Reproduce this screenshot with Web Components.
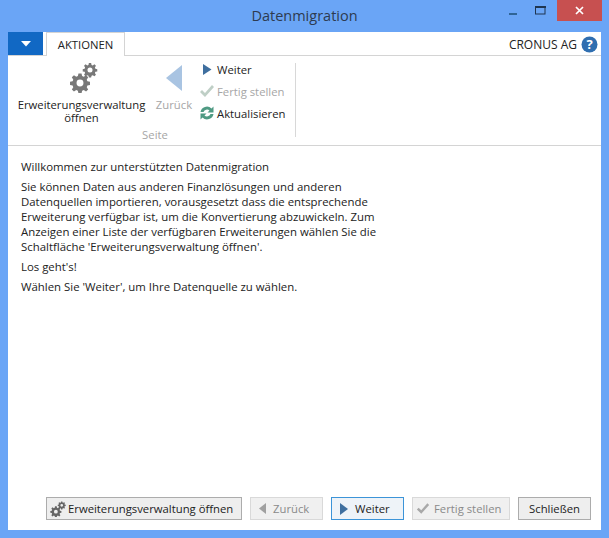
<!DOCTYPE html>
<html lang="de">
<head>
<meta charset="utf-8">
<title>Datenmigration</title>
<style>
  html, body { margin: 0; padding: 0; }
  body { width: 609px; height: 538px; overflow: hidden; font-family: "Open Sans", "Noto Sans", sans-serif; }
</style>
</head>
<body>
<nav-window>
  <ribbon-bar></ribbon-bar>
  <intro-text></intro-text>
  <footer-bar></footer-bar>
</nav-window>

<script>
// <use> can't reach across shadow roots, so the gear path gets inlined
const GEAR = 'M-1.6-10h3.2l.6 2.7 1.7.7 2.4-1.500 2.200 2.200-1.500 2.400.7 1.700 2.700.6v3.200l-2.700.6-.7 1.700 1.500 2.400-2.200 2.200-2.400-1.500-1.700.7-.6 2.700h-3.200l-.6-2.700-1.700-.7-2.400 1.500-2.200-2.200 1.500-2.400-.7-1.700-2.700-.6v-3.200l2.700-.6.7-1.700-1.500-2.400 2.200-2.200 2.400 1.500 1.700-.7zM0-3.600a3.600 3.600 0 1 0 0 7.200 3.600 3.600 0 0 0 0-7.200z';

const gears = (size) => `
  <svg width="${size}" height="${size}" viewBox="0 0 30 30" fill="#787878">
    <path fill-rule="evenodd" d="${GEAR}" transform="translate(12 20) scale(.96)"/>
    <path fill-rule="evenodd" d="${GEAR}" transform="translate(22 7) scale(.7)"/>
  </svg>`;

class NavWindow extends HTMLElement {
  constructor() {
    super();
    this.attachShadow({ mode: 'open' });
    this.shadowRoot.innerHTML = `
      <style>
        :host {
          display: flex;
          flex-direction: column;
          width: 609px;
          height: 538px;
          box-sizing: border-box;
          background: #6aa5f6;
          padding: 0 8px 8px;
          color: #222;
        }
        .titlebar {
          height: 32px;
          flex: none;
          display: flex;
          justify-content: center;
          align-items: center;
          position: relative;
        }
        .title {
          font-size: 14.5px;
          color: #2d3b50;
          margin-bottom: 1px;
        }
        .controls {
          position: absolute;
          top: 0;
          right: -1px;
          display: flex;
          align-items: flex-start;
        }
        .ctl {
          width: 30px;
          height: 21px;
          display: flex;
          align-items: center;
          justify-content: center;
        }
        .close {
          width: 45px;
          height: 21px;
          background: #c75050;
        }
        .client {
          flex: 1;
          min-height: 0;
          background: #fff;
          display: flex;
          flex-direction: column;
        }
      </style>
      <div class="titlebar">
        <span class="title">Datenmigration</span>
        <div class="controls">
          <div class="ctl">
            <svg width="10" height="10" viewBox="0 0 10 10"><rect x="1" y="7" width="8" height="2" fill="#2f6496"/></svg>
          </div>
          <div class="ctl" style="width:16px;margin:0 9px 0 4px">
            <svg width="11" height="9" viewBox="0 0 11 9"><rect x=".5" y=".5" width="9.500" height="7.500" fill="none" stroke="#1f3550"/><rect x="0" y="0" width="11" height="2" fill="#1f3550"/></svg>
          </div>
          <div class="ctl close">
            <svg width="9" height="9" viewBox="0 0 9 9"><path d="M1 1l7 7M8 1L1 8" stroke="#fff" stroke-width="1.700"/></svg>
          </div>
        </div>
      </div>
      <div class="client"><slot></slot></div>
    `;
  }
}

class RibbonBar extends HTMLElement {
  constructor() {
    super();
    this.attachShadow({ mode: 'open' });
    this.shadowRoot.innerHTML = `
      <style>
        :host { display: block; flex: none; font-size: 11.3px; }
        .tabs {
          height: 23px;
          display: flex;
          align-items: stretch;
          border-bottom: 1px solid #d4d4d4;
        }
        .menu {
          width: 35px;
          height: 23px;
          background: #1168c4;
          display: flex;
          align-items: center;
          justify-content: center;
        }
        .tab {
          margin-left: 3px;
          width: 79px;
          height: 24px;
          box-sizing: border-box;
          border: 1px solid #d4d4d4;
          border-bottom: 0;
          background: #fff;
          text-align: center;
          line-height: 24px;
          color: #222;
          position: relative;
          z-index: 1;
          margin-bottom: -1px;
        }
        .company {
          margin-left: auto;
          display: flex;
          align-items: center;
          gap: 4px;
          padding-right: 3px;
          padding-top: 1px;
          color: #222;
          font-size: 12px;
        }
        .body {
          height: 89px;
          border-bottom: 1px solid #d4d4d4;
          display: flex;
          align-items: flex-start;
        }
        .group {
          display: grid;
          grid-template-columns: 127px 54px auto;
          grid-template-rows: 66px 1fr;
          box-sizing: border-box;
          width: 288px;
          height: 74px;
          padding-left: 10px;
          margin-top: 7px;
          border-right: 1px solid #d8d8d8;
        }
        .big {
          display: flex;
          flex-direction: column;
          align-items: center;
          line-height: 13px;
          text-align: center;
          white-space: nowrap;
        }
        .big .ic { height: 35px; display: flex; align-items: flex-start; justify-content: center; }
        .gears { margin-left: 3px; }
        .back { padding-left: 4px; color: #a6a6a6; }
        .back svg { margin-top: 2px; }
        .small { display: flex; flex-direction: column; margin-top: -5px; }
        .row { height: 22px; display: flex; align-items: center; gap: 2px; white-space: nowrap; }
        .slot { width: 16px; height: 16px; flex: none; display: flex; align-items: center; justify-content: center; }
        .row.off { color: #a6a6a6; }
        .caption { grid-column: 1 / span 3; text-align: center; color: #a6a6a6; padding-right: 3px; line-height: 12px; }
      </style>
      <div class="tabs">
        <div class="menu"><svg width="10" height="6" viewBox="0 0 10 6"><path d="M0 0h10L5 5.500z" fill="#fff"/></svg></div>
        <div class="tab">AKTIONEN</div>
        <div class="company">CRONUS AG
          <svg width="17" height="17" viewBox="0 0 17 17">
            <circle cx="8.500" cy="8.500" r="8" fill="#2f6eb0"/>
            <text x="8.500" y="13.200" text-anchor="middle" font-size="13" font-weight="700" font-family="Open Sans" fill="#fff">?</text>
          </svg>
        </div>
      </div>
      <div class="body">
        <div class="group">
          <div class="big">
            <div class="ic gears">${gears(30)}</div>
            <span>Erweiterungsverwaltung<br>öffnen</span>
          </div>
          <div class="big back">
            <div class="ic"><svg width="17" height="26" viewBox="0 0 17 26"><path d="M16 0v26L0 13z" fill="#a9c4e2"/></svg></div>
            <span>Zurück</span>
          </div>
          <div class="small">
            <div class="row"><span class="slot"><svg width="9" height="11" viewBox="0 0 9 11"><path d="M0 0v11l8.500-5.500z" fill="#3f6f9f"/></svg></span>Weiter</div>
            <div class="row off"><span class="slot"><svg width="16" height="14" viewBox="0 0 16 14"><path d="M1 8l2-2 3 3 7-8 2 2-9 10z" fill="#bfcfc6"/></svg></span>Fertig stellen</div>
            <div class="row"><span class="slot"><svg width="16" height="16" viewBox="0 0 16 16"><path d="M1.500 7a6.500 6.500 0 0 1 11-3.500L14.500 1.500V7.500H8.500l2-2A3.800 3.800 0 0 0 4.500 7z" fill="#4f9a83"/><path d="M14.500 9a6.500 6.500 0 0 1-11 3.500L1.500 14.500V8.500h6l-2 2A3.800 3.800 0 0 0 11.500 9z" fill="#4f9a83"/></svg></span>Aktualisieren</div>
          </div>
          <div class="caption">Seite</div>
        </div>
      </div>
    `;
  }
}

class IntroText extends HTMLElement {
  constructor() {
    super();
    this.attachShadow({ mode: 'open' });
    this.shadowRoot.innerHTML = `
      <style>
        :host {
          display: block;
          flex: 1;
          min-height: 0;
          padding: 13px 0 0 13px;
          font-size: 11.4px;
          line-height: 15px;
          color: #222;
        }
        p { margin: 0 0 5px; white-space: nowrap; }
        p:first-child { margin-bottom: 6px; }
      </style>
      <p>Willkommen zur unterstützten Datenmigration</p>
      <p>Sie können Daten aus anderen Finanzlösungen und anderen<br>
      Datenquellen importieren, vorausgesetzt dass die entsprechende<br>
      Erweiterung verfügbar ist, um die Konvertierung abzuwickeln. Zum<br>
      Anzeigen einer Liste der verfügbaren Erweiterungen wählen Sie die<br>
      Schaltfläche 'Erweiterungsverwaltung öffnen'.</p>
      <p>Los geht's!</p>
      <p>Wählen Sie 'Weiter', um Ihre Datenquelle zu wählen.</p>
    `;
  }
}

class FooterBar extends HTMLElement {
  constructor() {
    super();
    this.attachShadow({ mode: 'open' });
    this.shadowRoot.innerHTML = `
      <style>
        :host {
          display: flex;
          flex: none;
          justify-content: flex-end;
          gap: 8px;
          padding: 0 10px 10px 0;
          font-size: 11.3px;
        }
        .btn {
          height: 23px;
          box-sizing: border-box;
          border: 1px solid #acacac;
          background: #eeeeee;
          display: flex;
          align-items: center;
          color: #222;
          white-space: nowrap;
        }
        .off { border-color: #d9d9d9; color: #8a8a8a; background: #f0f0f0; }
        .focus { border-color: #3c94d8; background: #eef3f8; }
      </style>
      <div class="btn" style="width:196px;padding-left:3px;gap:2px">
        <svg width="16" height="16" viewBox="0 0 30 30" fill="#666"><path fill-rule="evenodd" d="${GEAR}" transform="translate(11 20)"/><path fill-rule="evenodd" d="${GEAR}" transform="translate(22 8) scale(.72)"/></svg>
        Erweiterungsverwaltung öffnen</div>
      <div class="btn off" style="width:73px;padding-left:8px;gap:6px">
        <svg width="8" height="11" viewBox="0 0 8 11"><path d="M7 0v11L0 5.500z" fill="#a0a0a0"/></svg>Zurück</div>
      <div class="btn focus" style="width:73px;padding-left:8px;gap:7px">
        <svg width="8" height="12" viewBox="0 0 8 12"><path d="M0 0v12l8-6z" fill="#3f6f9f"/></svg>Weiter</div>
      <div class="btn off" style="width:98px;padding-left:3px;gap:4px">
        <svg width="14" height="13" viewBox="0 0 16 14"><path d="M1 8l2-2 3 3 7-8 2 2-9 10z" fill="#a8a8a8"/></svg>Fertig stellen</div>
      <div class="btn" style="width:73px;justify-content:center">Schließen</div>
    `;
  }
}

customElements.define('nav-window', NavWindow);
customElements.define('ribbon-bar', RibbonBar);
customElements.define('intro-text', IntroText);
customElements.define('footer-bar', FooterBar);
</script>
</body>
</html>
